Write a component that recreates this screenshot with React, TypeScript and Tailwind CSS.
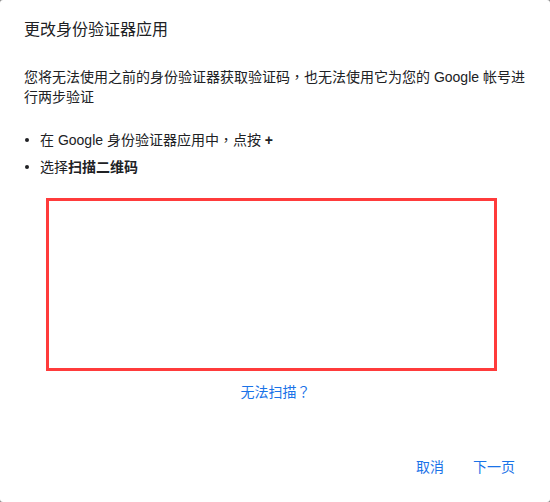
import React from "react";

const P = ({ c }: { c: string }) => (
  <span className="leading-none" style={{ fontFamily: '"Noto Sans CJK TC", sans-serif' }}>{c}</span>
);

export default function App() {
  const font = { fontFamily: '"Liberation Sans", "Noto Sans CJK SC", sans-serif' };
  return (
    <div className="w-[550px] h-[502px] bg-[#8a8a8a]" style={font}>
      <div className="w-[550px] h-[502px] bg-white rounded-[3px] flex flex-col text-[#202124]">
        <div className="pl-[24px] pt-[18px] text-[16px] leading-[24px]">更改身份验证器应用</div>
        <div className="pl-[24px] pr-[24px] mt-[25px] text-[14px] leading-[20px]">
          您将无法使用之前的身份验证器获取验证码<P c="，" />也无法使用它为您的 Google 帐号进行两步验证
        </div>
        <ul className="mt-[23px] pl-[24px] flex flex-col gap-[7px] text-[14px] leading-[20px]">
          <li className="flex items-center h-[20px]">
            <span className="w-[4px] h-[4px] rounded-full bg-[#202124] ml-[1px] mr-[11px]" />
            <span>
              在 Google 身份验证器应用中<P c="，" />点按 <b className="font-bold">+</b>
            </span>
          </li>
          <li className="flex items-center h-[20px]">
            <span className="w-[4px] h-[4px] rounded-full bg-[#202124] ml-[1px] mr-[11px]" />
            <span>
              选择<b className="font-bold">扫描二维码</b>
            </span>
          </li>
        </ul>
        <div className="mt-[21px] ml-[46px] w-[451px] h-[173px] shrink-0 border-[3px] border-[#ff3b3b]" />
        <div className="mt-[11px] h-[20px] text-center text-[14px] leading-[20px] text-[#1a73e8] pl-[1px]">
          无法扫描<P c="？" />
        </div>
        <div className="mt-auto mb-[25px] flex justify-end pr-[35px] gap-[29px] text-[14px] leading-[20px] text-[#1a73e8]">
          <span>取消</span>
          <span>下一页</span>
        </div>
      </div>
    </div>
  );
}
